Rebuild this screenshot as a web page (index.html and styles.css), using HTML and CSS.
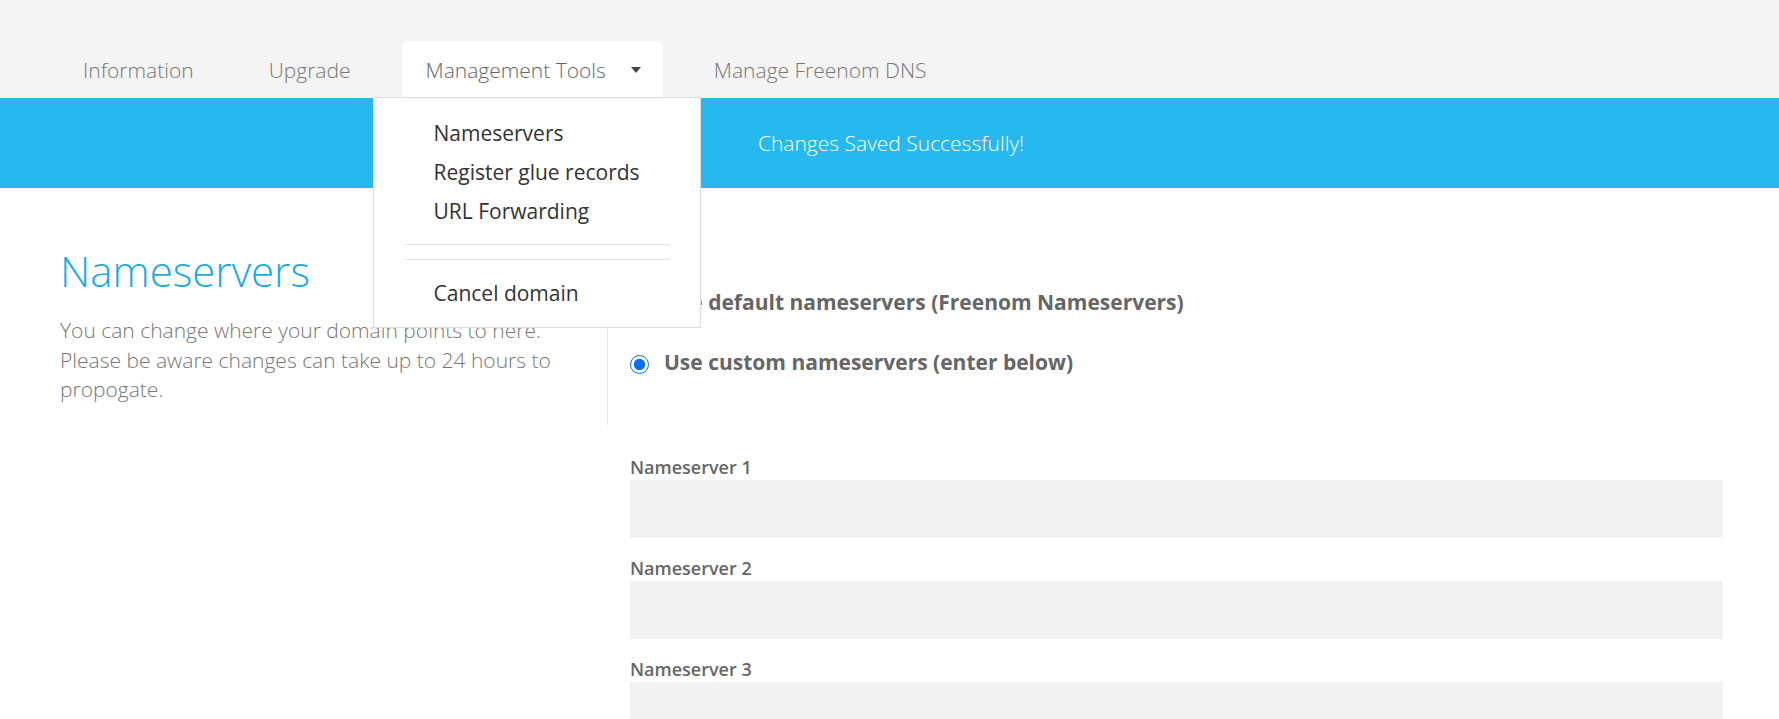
FILE: index.html
```html
<!DOCTYPE html>
<html lang="en">
<head>
<meta charset="utf-8">
<title>Nameservers</title>
<link rel="stylesheet" href="styles.css">
</head>
<body>
<header class="header">
  <ul class="tabs">
    <li class="tab"><a href="#">Information</a></li>
    <li class="tab"><a href="#">Upgrade</a></li>
    <li class="tab tab-active">
      <a href="#">Management Tools</a>
      <span class="caret"></span>
      <div class="dropdown">
        <a class="dd-item" href="#">Nameservers</a>
        <a class="dd-item" href="#">Register glue records</a>
        <a class="dd-item" href="#">URL Forwarding</a>
        <div class="dd-divider"></div>
        <div class="dd-divider dd-divider-second"></div>
        <a class="dd-item" href="#">Cancel domain</a>
      </div>
    </li>
    <li class="tab"><a href="#">Manage Freenom DNS</a></li>
  </ul>
</header>
<div class="banner">Changes Saved Successfully!</div>
<main class="content">
  <section class="intro">
    <h1 class="title">Nameservers</h1>
    <p class="lead">You can change where your domain points to here. Please be aware changes can take up to 24 hours to propogate.</p>
  </section>
  <section class="choices">
    <label class="choice"><input type="radio" name="ns" class="radio"><span>Use default nameservers (Freenom Nameservers)</span></label>
    <label class="choice"><input type="radio" name="ns" class="radio" checked><span>Use custom nameservers (enter below)</span></label>
  </section>
  <section class="fields">
    <div class="field">
      <label class="field-label">Nameserver 1</label>
      <input class="field-input" type="text">
    </div>
    <div class="field">
      <label class="field-label">Nameserver 2</label>
      <input class="field-input" type="text">
    </div>
    <div class="field">
      <label class="field-label">Nameserver 3</label>
      <input class="field-input" type="text">
    </div>
  </section>
</main>
</body>
</html>
```
FILE: styles.css
```css
* { box-sizing: border-box; }
html, body { margin: 0; padding: 0; }
body {
  font-family: "Open Sans", "Liberation Sans", sans-serif;
  background: #ffffff;
  color: #666;
  overflow: hidden;
}
a { text-decoration: none; color: inherit; }

.header {
  background: #f4f4f4;
  height: 98px;
  position: relative;
  z-index: 5;
}
.tabs {
  list-style: none;
  margin: 0;
  padding: 41px 0 0 59px;
  display: flex;
  gap: 27px;
}
.tab {
  position: relative;
  height: 57px;
  padding: 0 24px;
  display: flex;
  align-items: center;
  font-size: 21px;
  font-weight: 300;
  color: #777;
}
.tab-active {
  background: #ffffff;
  border-radius: 6px 6px 0 0;
  padding-right: 22px;
  color: #666;
}
.caret {
  margin-left: 25px;
  width: 0;
  height: 0;
  border-left: 5.5px solid transparent;
  border-right: 5.5px solid transparent;
  border-top: 6px solid #444;
  margin-top: 1px;
}
.dropdown {
  position: absolute;
  top: 56px;
  left: -29px;
  width: 328px;
  background: #fff;
  border: 1px solid #dddddd;
  padding: 16px 0 14px 0;
  display: flex;
  flex-direction: column;
}
.dd-item {
  display: block;
  padding-left: 60px;
  font-size: 21px;
  font-weight: 400;
  line-height: 39px;
  color: #333;
}
.dd-divider {
  height: 1px;
  background: #e2e2e2;
  margin: 13px 30px 0 30px;
}
.dd-divider-second {
  margin-top: 14px;
  margin-bottom: 14px;
}

.banner {
  background: #27b8ef;
  height: 90px;
  display: flex;
  align-items: center;
  justify-content: center;
  padding-left: 3px;
  color: #fff;
  font-size: 21px;
  font-weight: 300;
}

.content {
  display: grid;
  grid-template-columns: 547px 1fr;
  padding: 44px 56px 0 60px;
}
.intro {
  padding-top: 14px;
  padding-right: 30px;
}
.title {
  margin: 0;
  font-size: 42px;
  line-height: 50px;
  font-weight: 300;
  color: #1ea9e6;
}
.lead {
  margin: 20px 0 0 0;
  font-size: 21px;
  line-height: 29.5px;
  font-weight: 300;
  color: #777;
}
.choices {
  border-left: 1px solid #e6e6e6;
  padding: 55px 0 48px 22px;
  display: flex;
  flex-direction: column;
  gap: 30px;
}
.choice {
  display: flex;
  align-items: center;
  height: 30px;
  font-size: 21px;
  font-weight: 700;
  color: #666;
}
.radio {
  width: 19px;
  height: 19px;
  margin: 4px 15px 0 0;
  accent-color: #0a6cff;
}
.fields {
  grid-column: 2;
  padding: 30px 0 0 23px;
}
.field { margin-bottom: 18px; }
.field-label {
  display: block;
  font-size: 18px;
  font-weight: 600;
  line-height: 24px;
  margin-bottom: 1px;
  color: #666;
}
.field-input {
  display: block;
  width: 100%;
  height: 58px;
  border: none;
  background: #f2f2f2;
  outline: none;
  padding: 0 16px;
  font-family: inherit;
  font-size: 18px;
}
```
